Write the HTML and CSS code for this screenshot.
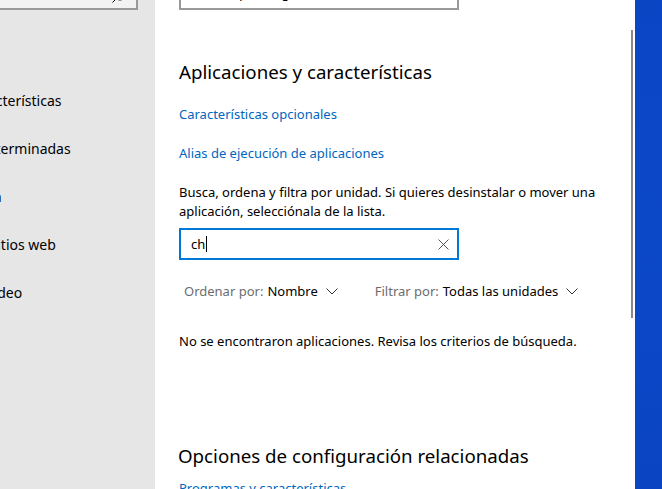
FILE: index.html
```html
<!DOCTYPE html>
<html lang="es">
<head>
<meta charset="utf-8">
<title>Aplicaciones y características</title>
<link rel="stylesheet" href="styles.css">
</head>
<body>
<div class="window">
  <aside class="sidebar">
    <div class="side-search">
      <span class="side-search-text">Buscar una configuración</span>
      <svg class="side-search-icon" width="14" height="14" viewBox="0 0 14 14"><circle cx="8" cy="6" r="5" fill="none" stroke="#000" stroke-width="1"/><path d="M4.5 9.5 L0.5 13.5" stroke="#000" stroke-width="1"/></svg>
    </div>
    <nav class="nav">
      <div class="nav-item">Aplicaciones y características</div>
      <div class="nav-item">Aplicaciones predeterminadas</div>
      <div class="nav-item">Mapas sin conexión</div>
      <div class="nav-item">Aplicaciones para sitios web</div>
      <div class="nav-item">Reproducción de vídeo</div>
    </nav>
  </aside>
  <main class="main">
    <div class="dropdown"><span>En cualquier lugar</span></div>
    <h2 class="heading">Aplicaciones y características</h2>
    <a class="link">Características opcionales</a>
    <a class="link">Alias de ejecución de aplicaciones</a>
    <p class="desc">Busca, ordena y filtra por unidad. Si quieres desinstalar o mover una aplicación, selecciónala de la lista.</p>
    <div class="search">
      <span class="search-text">ch</span><span class="caret"></span>
      <svg class="clear" width="11" height="11" viewBox="0 0 11 11"><path d="M0.5 0.5 L10.5 10.5 M10.5 0.5 L0.5 10.5" stroke="#444" stroke-width="0.9" fill="none"/></svg>
    </div>
    <div class="filters">
      <div class="filter"><span class="flabel">Ordenar por:</span><span class="fvalue">Nombre</span>
        <svg class="chev" width="12" height="7" viewBox="0 0 12 7"><path d="M0.5 0.5 L6 6 L11.5 0.5" stroke="#333" stroke-width="1" fill="none"/></svg></div>
      <div class="filter"><span class="flabel">Filtrar por:</span><span class="fvalue">Todas las unidades</span>
        <svg class="chev" width="12" height="7" viewBox="0 0 12 7"><path d="M0.5 0.5 L6 6 L11.5 0.5" stroke="#333" stroke-width="1" fill="none"/></svg></div>
    </div>
    <p class="empty">No se encontraron aplicaciones. Revisa los criterios de búsqueda.</p>
    <h2 class="heading related">Opciones de configuración relacionadas</h2>
    <a class="link last">Programas y características</a>
    <div class="scrollbar"></div>
  </main>
  <div class="desktop"></div>
</div>
</body>
</html>
```

FILE: styles.css
```css
* { box-sizing: border-box; }
html, body { margin: 0; padding: 0; }
body {
  font-family: "Noto Sans", "Open Sans", sans-serif;
  color: #000;
  overflow: hidden;
}
.window {
  display: flex;
  width: 662px;
  height: 489px;
  overflow: hidden;
}
.sidebar {
  width: 155px;
  flex: none;
  background: #e6e6e6;
  overflow: hidden;
  position: relative;
}
.side-search {
  width: 160px;
  height: 32px;
  margin: -22px 0 0 -22px;
  border: 2px solid #999;
  background: #f2f2f2;
  position: relative;
  font-size: 13px;
  padding: 4px 10px;
  color: #666;
}
.side-search-text { visibility: hidden; }
.side-search-icon {
  position: absolute;
  right: 10px;
  top: 9px;
}
.nav {
  margin-left: -128px;
  margin-top: 81px;
  display: flex;
  flex-direction: column;
}
.nav-item {
  height: 48px;
  line-height: 20px;
  font-size: 14px;
  white-space: nowrap;
}
.main {
  width: 480px;
  flex: none;
  background: #fff;
  padding-left: 24px;
  position: relative;
  display: flex;
  flex-direction: column;
  align-items: flex-start;
  overflow: hidden;
}
.main > * { flex-shrink: 0; }
.dropdown {
  width: 280px;
  height: 32px;
  margin-top: -22px;
  border: 2px solid #999;
  font-size: 13px;
  line-height: 20px;
  padding: 0 10px;
  display: flex;
  align-items: flex-end;
  overflow: hidden;
}
.dropdown span { position: relative; top: -5px; }
.heading {
  font-weight: 400;
  font-size: 18.7px;
  line-height: 26px;
  margin: 49px 0 0 0;
}
.link {
  color: #0067c0;
  font-size: 13px;
  line-height: 20px;
  margin-top: 19px;
}
.desc {
  font-size: 13px;
  line-height: 19px;
  margin: 20px 0 0 0;
  width: 440px;
}
.search {
  width: 280px;
  height: 32px;
  margin-top: 7px;
  border: 2px solid #0078d7;
  display: flex;
  align-items: center;
  padding: 0 8px 0 10px;
  font-size: 13px;
}
.caret {
  width: 1px;
  height: 16px;
  background: #000;
  margin-left: 1px;
}
.clear { margin-left: auto; }
.filters {
  display: flex;
  gap: 37px;
  margin-top: 21px;
  padding-left: 5px;
  font-size: 13px;
  line-height: 20px;
}
.filter { display: flex; align-items: center; white-space: nowrap; }
.flabel { color: #6d6d6d; }
.fvalue { margin-left: 4px; }
.chev { margin-left: 8px; }
.empty {
  font-size: 13px;
  line-height: 20px;
  margin: 30px 0 0 0;
}
.heading.related { margin-top: 92px; margin-left: -1px; }
.link.last { margin-top: 9px; }
.scrollbar {
  position: absolute;
  left: 476px;
  top: 30px;
  width: 2px;
  height: 288px;
  background: #8a8a8a;
}
.desktop {
  flex: 1;
  background: linear-gradient(180deg, #0a45c4 0%, #0b48c8 50%, #0a44c2 100%);
}
```
